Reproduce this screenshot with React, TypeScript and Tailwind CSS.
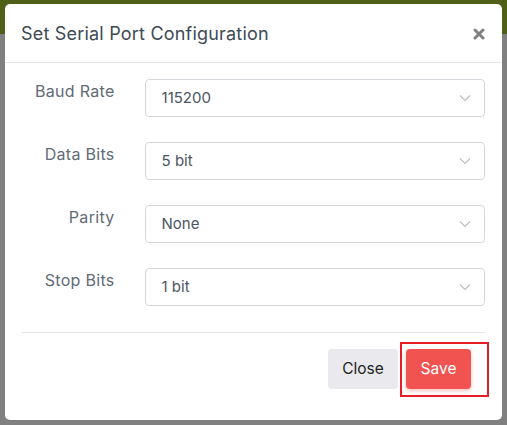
import React from "react";

const rows = [
  { label: "Baud Rate", value: "115200" },
  { label: "Data Bits", value: "5 bit" },
  { label: "Parity", value: "None" },
  { label: "Stop Bits", value: "1 bit" },
];

function Chevron() {
  return (
    <svg width="12" height="8" viewBox="0 0 12 8" fill="none">
      <path d="M1 1.5L6 6.5L11 1.5" stroke="#b8bec6" strokeWidth="1.1" />
    </svg>
  );
}

export default function App() {
  return (
    <div
      className="relative w-[507px] h-[425px] overflow-hidden flex flex-col bg-[#808080]"
      style={{ fontFamily: "Inter, 'Open Sans', sans-serif" }}
    >
      <div className="h-[34px] bg-[#4e5f17]" />
      <div className="flex-1 bg-[#808080]" />
      <div className="absolute left-[5px] top-[4px] w-[497px] h-[416px] bg-white rounded-[5px] flex flex-col">
        <div className="h-[59px] border-b border-[#e3e6ea] flex items-center justify-between pl-[16px] pr-[17px]">
          <span className="text-[18px] text-[#3d4a54] tracking-[0.2px]">Set Serial Port Configuration</span>
          <svg width="12" height="12" viewBox="0 0 12 12" className="mt-[1px]">
            <path d="M2 2L10 10M10 2L2 10" stroke="#808080" strokeWidth="3" strokeLinecap="round" />
          </svg>
        </div>
        <div className="px-[17px] pt-[16px] flex flex-col">
          <div className="flex flex-col gap-[25px]">
            {rows.map((r) => (
              <div key={r.label} className="flex items-start">
                <div className="w-[93px] text-right text-[16px] text-[#5f6b75] tracking-[0.3px]">{r.label}</div>
                <div className="ml-[30px] w-[342px] h-[38px] border border-[#d3d7dc] rounded-[4px] flex items-center justify-between pl-[16px] pr-[13px]">
                  <span className="text-[15px] text-[#4a555f]">{r.value}</span>
                  <Chevron />
                </div>
              </div>
            ))}
          </div>
          <div className="mt-[26px] border-t border-[#e3e6ea]" />
          <div className="flex justify-end items-center mt-[16px] pr-[14px] gap-[8px]">
            <button className="h-[40px] w-[70px] rounded-[4px] bg-[#e9e9ee] text-[15.5px] text-[#222]">Close</button>
            <div className="relative">
              <button className="h-[40px] w-[65px] rounded-[4px] bg-[#f05350] text-[15.5px] text-white shadow-[0_2px_4px_rgba(240,83,80,0.35)]">Save</button>
              <div className="absolute -left-[6px] -top-[7px] w-[89px] h-[55px] border-2 border-[#e81d25] pointer-events-none" />
            </div>
          </div>
        </div>
      </div>
    </div>
  );
}
